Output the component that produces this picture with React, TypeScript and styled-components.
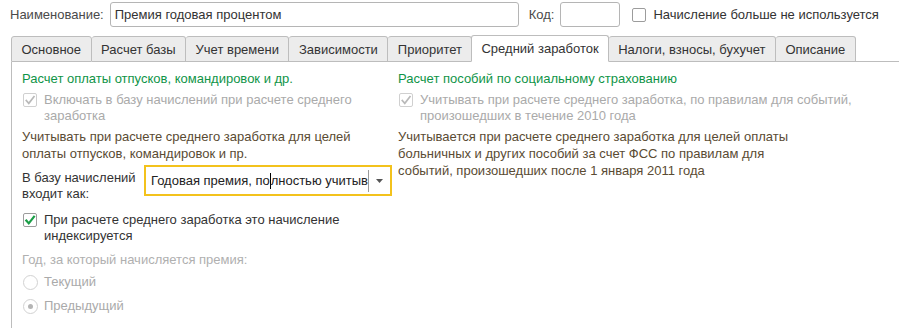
import styled, { createGlobalStyle } from 'styled-components';

const GlobalStyle = createGlobalStyle`
    html, body {
        margin: 0;
        padding: 0;
        background: #ffffff;
    }
    body {
        font-family: 'Liberation Sans', Arial, sans-serif;
        font-size: 13px;
        color: #333333;
    }
`;

const tabs = [
    'Основное',
    'Расчет базы',
    'Учет времени',
    'Зависимости',
    'Приоритет',
    'Средний заработок',
    'Налоги, взносы, бухучет',
    'Описание'
];

export default function App() {
    return (
        <Page>
            <GlobalStyle />
            <TopRow>
                <FieldLabel>Наименование:</FieldLabel>
                <TextBox $width={409}>Премия годовая процентом</TextBox>
                <FieldLabel $gap={10}>Код:</FieldLabel>
                <TextBox $width={60} />
                <CheckRow $top={0} $left={12}>
                    <CheckBox $disabled={false} />
                    <CheckText $tone="normal">Начисление больше не используется</CheckText>
                </CheckRow>
            </TopRow>

            <TabBar>
                {tabs.map((t) => (
                    <Tab key={t} $active={t === 'Средний заработок'}>
                        {t}
                    </Tab>
                ))}
                <TabFill />
            </TabBar>

            <Panel>
                <Column>
                    <GroupTitle>Расчет оплаты отпусков, командировок и др.</GroupTitle>
                    <CheckRow $top={5}>
                        <CheckBox $disabled>
                            <CheckMark color="#b9b9b9" />
                        </CheckBox>
                        <CheckText $tone="disabled">
                            Включать в базу начислений при расчете среднего
                            <br />
                            заработка
                        </CheckText>
                    </CheckRow>
                    <Note>
                        Учитывать при расчете среднего заработка для целей
                        <br />
                        оплаты отпусков, командировок и пр.
                    </Note>
                    <ComboRow>
                        <ComboLabel>
                            В базу начислений
                            <br />
                            входит как:
                        </ComboLabel>
                        <Combo>
                            <ComboText>
                                Годовая премия, по<Caret />лностью учитыв
                            </ComboText>
                            <ComboButton>
                                <svg width="7" height="4" viewBox="0 0 7 4">
                                    <path d="M0 0 L7 0 L3.5 4 Z" fill="#555" />
                                </svg>
                            </ComboButton>
                        </Combo>
                    </ComboRow>
                    <CheckRow $top={10}>
                        <CheckBox $disabled={false}>
                            <CheckMark color="#1a9e47" bold />
                        </CheckBox>
                        <CheckText $tone="normal">
                            При расчете среднего заработка это начисление
                            <br />
                            индексируется
                        </CheckText>
                    </CheckRow>
                    <SubCaption>Год, за который начисляется премия:</SubCaption>
                    <RadioRow $top={6}>
                        <Radio />
                        <CheckText $tone="disabled">Текущий</CheckText>
                    </RadioRow>
                    <RadioRow $top={8}>
                        <Radio $checked />
                        <CheckText $tone="disabled">Предыдущий</CheckText>
                    </RadioRow>
                </Column>

                <Column>
                    <GroupTitle>Расчет пособий по социальному страхованию</GroupTitle>
                    <CheckRow $top={5}>
                        <CheckBox $disabled>
                            <CheckMark color="#b9b9b9" />
                        </CheckBox>
                        <CheckText $tone="disabled">
                            Учитывать при расчете среднего заработка, по правилам для событий,
                            <br />
                            произошедших в течение 2010 года
                        </CheckText>
                    </CheckRow>
                    <Note>
                        Учитывается при расчете среднего заработка для целей оплаты
                        <br />
                        больничных и других пособий за счет ФСС по правилам для
                        <br />
                        событий, произошедших после 1 января 2011 года
                    </Note>
                </Column>
            </Panel>
        </Page>
    );
}

function CheckMark({ color, bold }: { color: string; bold?: boolean }) {
    return (
        <svg width="13" height="13" viewBox="0 0 13 13" style={{ display: 'block' }}>
            <path
                d="M2.5 6.5 L5.2 9.6 L10.8 2.4"
                fill="none"
                stroke={color}
                strokeWidth={bold ? 2.4 : 1.8}
                strokeLinecap="square"
            />
        </svg>
    );
}

const Page = styled.div`
    width: 899px;
    height: 328px;
    overflow: hidden;
    display: flex;
    flex-direction: column;
`;

const TopRow = styled.div`
    display: flex;
    align-items: center;
    padding: 2px 0 0 10px;
    height: 25px;
`;

const FieldLabel = styled.span<{ $gap?: number }>`
    margin-left: ${(p) => p.$gap ?? 0}px;
    margin-right: 6px;
    color: #4a4a4a;
    white-space: nowrap;
`;

const TextBox = styled.div<{ $width: number }>`
    box-sizing: border-box;
    width: ${(p) => p.$width}px;
    height: 25px;
    border: 1px solid #b5b5b5;
    border-radius: 3px;
    padding: 0 4px;
    display: flex;
    align-items: center;
    color: #333;
    white-space: nowrap;
`;

const TabBar = styled.div`
    display: flex;
    align-items: flex-end;
    margin: 8px 0 0 11px;
    height: 27px;
`;

const Tab = styled.div<{ $active: boolean }>`
    box-sizing: border-box;
    height: ${(p) => (p.$active ? 27 : 26)}px;
    padding: 0 ${(p) => (p.$active ? 9 : 9.5)}px;
    display: flex;
    align-items: center;
    justify-content: center;
    border: 1px solid #bdbdbd;
    border-bottom: ${(p) => (p.$active ? '1px solid #ffffff' : '1px solid #bdbdbd')};
    border-left: ${(p) => (p.$active ? '1px solid #bdbdbd' : 'none')};
    border-radius: 3px 3px 0 0;
    background: ${(p) => (p.$active ? '#ffffff' : '#ececec')};
    color: #333;
    white-space: nowrap;
    margin-left: ${(p) => (p.$active ? -1 : 0)}px;

    &:first-child {
        border-left: 1px solid #bdbdbd;
    }
`;

const TabFill = styled.div`
    flex: 1;
    height: 1px;
    background: #bdbdbd;
`;

const Panel = styled.div`
    flex: 1;
    margin-left: 11px;
    border-left: 1px solid #bdbdbd;
    display: grid;
    grid-template-columns: 376px 1fr;
    padding: 9px 0 0 10px;
`;

const Column = styled.div`
    display: flex;
    flex-direction: column;
    align-items: flex-start;
`;

const GroupTitle = styled.div`
    color: #109447;
    line-height: 16px;
    white-space: nowrap;
`;

const CheckRow = styled.div<{ $top: number; $left?: number }>`
    display: flex;
    align-items: flex-start;
    gap: 7px;
    margin-top: ${(p) => p.$top}px;
    margin-left: ${(p) => p.$left ?? 1}px;
`;

const CheckBox = styled.div<{ $disabled: boolean }>`
    box-sizing: border-box;
    width: 14px;
    height: 14px;
    flex: none;
    margin-top: 1px;
    border: 1px solid ${(p) => (p.$disabled ? '#d0d0d0' : '#9c9c9c')};
    border-radius: 2px;
    background: #fff;
    display: flex;
    align-items: center;
    justify-content: center;
`;

const CheckText = styled.div<{ $tone: 'normal' | 'disabled' }>`
    color: ${(p) => (p.$tone === 'disabled' ? '#aaaaaa' : '#333333')};
    line-height: 16px;
    white-space: nowrap;
`;

const Note = styled.div`
    margin-top: 4px;
    color: #5a4b33;
    line-height: 17px;
    white-space: nowrap;
`;

const ComboRow = styled.div`
    display: flex;
    align-items: flex-start;
    margin-top: 3px;
`;

const ComboLabel = styled.div`
    width: 122px;
    padding-top: 5px;
    color: #333;
    line-height: 16px;
    white-space: nowrap;
`;

const Combo = styled.div`
    box-sizing: border-box;
    width: 248px;
    height: 31px;
    border: 2px solid #f3c21c;
    display: flex;
    align-items: center;
    background: #fff;
`;

const ComboText = styled.div`
    flex: 1;
    padding-left: 5px;
    color: #222;
    white-space: nowrap;
    overflow: hidden;
    border-right: 1px solid #9a9a9a;
    height: 22px;
    display: flex;
    align-items: center;
`;

const Caret = styled.span`
    display: inline-block;
    width: 1px;
    height: 16px;
    background: #000;
`;

const ComboButton = styled.div`
    width: 21px;
    display: flex;
    align-items: center;
    justify-content: center;
`;

const SubCaption = styled.div`
    margin-top: 8px;
    color: #b0b0b0;
    line-height: 16px;
    white-space: nowrap;
`;

const RadioRow = styled.div<{ $top: number }>`
    display: flex;
    align-items: center;
    gap: 6px;
    margin-top: ${(p) => p.$top}px;
    margin-left: 1px;
`;

const Radio = styled.div<{ $checked?: boolean }>`
    box-sizing: border-box;
    width: 15px;
    height: 15px;
    border-radius: 50%;
    border: 1px solid #d2d2d2;
    background: #fff;
    display: flex;
    align-items: center;
    justify-content: center;

    &::after {
        content: '';
        width: 5px;
        height: 5px;
        border-radius: 50%;
        background: ${(p) => (p.$checked ? '#b5b5b5' : 'transparent')};
    }
`;
